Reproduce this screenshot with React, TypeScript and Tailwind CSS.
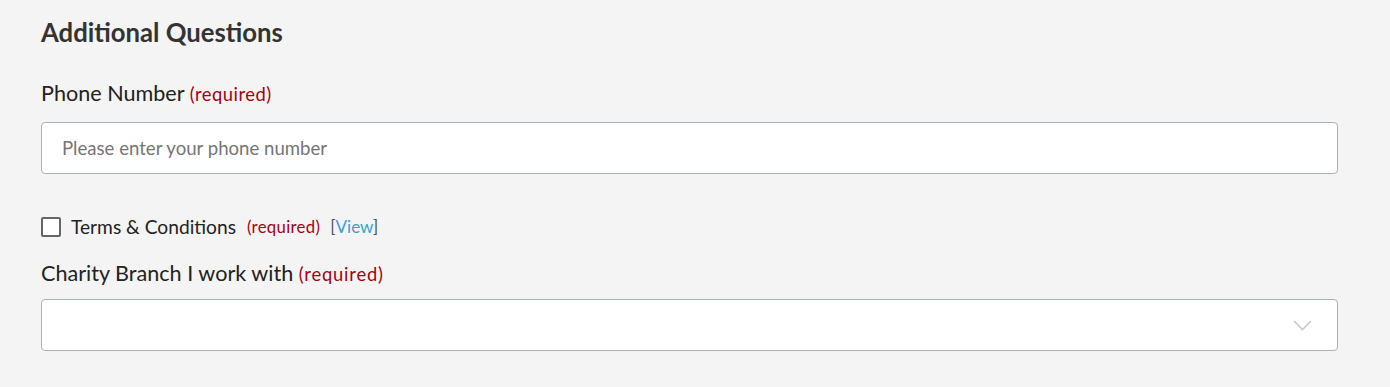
export default function App() {
  return (
    <div
      className="min-h-[387px] w-full bg-[#f4f4f4] pl-[41px] pr-[52px] pt-[18px]"
      style={{ fontFamily: "Lato, 'Open Sans', sans-serif" }}
    >
      <h2 className="text-[25.7px] leading-[29px] font-bold text-[#333333]">Additional Questions</h2>

      <label className="mt-[34px] block text-[21.6px] leading-[24px] text-[#222222]">
        Phone Number{" "}
        <span className="text-[18.4px] tracking-[0.5px] text-[#a80010]">(required)</span>
      </label>
      <input
        type="text"
        placeholder="Please enter your phone number"
        className="mt-[16px] block h-[52px] w-full rounded-[4px] border border-[#aab2bd] bg-white px-[20px] text-[18.6px] text-[#333] placeholder:text-[#757575] outline-none"
      />

      <div className="mt-[42px] flex items-center">
        <span className="h-[20px] w-[20px] rounded-[2px] border-2 border-[#666666] bg-white" />
        <span className="ml-[10px] text-[19.2px] leading-[22px] text-[#222222]">Terms &amp; Conditions</span>
        <span className="ml-[11px] text-[16.8px] tracking-[0.3px] leading-[22px] text-[#a80010]">(required)</span>
        <span className="ml-[10px] text-[17px] leading-[22px] text-[#555555]">
          [<span className="text-[#34a3d3]">View</span>]
        </span>
      </div>

      <label className="mt-[23px] block text-[21.6px] leading-[24px] text-[#222222]">
        Charity Branch I work with{" "}
        <span className="text-[18.4px] tracking-[0.8px] text-[#a80010]">(required)</span>
      </label>
      <div className="mt-[13px] flex h-[52px] w-full items-center justify-end rounded-[4px] border border-[#aab2bd] bg-white pr-[25px]">
        <svg width="19" height="11" viewBox="0 0 19 11" fill="none" stroke="#c8c8c8" strokeWidth="1.6">
          <path d="M1 1l8.5 8.5L18 1" />
        </svg>
      </div>
    </div>
  );
}
